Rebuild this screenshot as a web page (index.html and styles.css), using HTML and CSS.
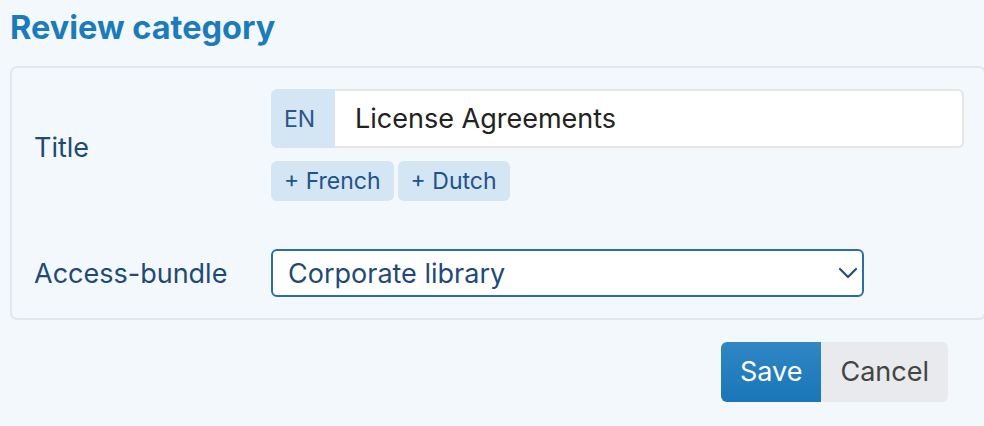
FILE: index.html
```html
<!DOCTYPE html>
<html lang="en">
<head>
    <meta charset="UTF-8">
    <title>Review category</title>
    <meta name="viewport" content="width=device-width, initial-scale=1">
    <link rel="stylesheet" href="styles.css">
</head>
<body>
    <main class="page">
        <h1 class="page-title">Review category</h1>
        <form class="panel">
            <div class="grid">
                <label class="field-label title-label" for="title-en">Title</label>
                <div class="field">
                    <div class="lang-input">
                        <span class="lang-tag">EN</span>
                        <input id="title-en" type="text" value="License Agreements">
                    </div>
                    <div class="lang-add">
                        <button type="button" class="lang-btn">+ French</button>
                        <button type="button" class="lang-btn">+ Dutch</button>
                    </div>
                </div>
                <label class="field-label" for="bundle">Access-bundle</label>
                <div class="select-wrap">
                    <select id="bundle">
                        <option>Corporate library</option>
                    </select>
                    <svg class="chevron" width="20" height="12" viewBox="0 0 20 12">
                        <path d="M2 2 L10 10 L18 2" fill="none" stroke="#2b4d70" stroke-width="2.2" stroke-linecap="round" stroke-linejoin="round"/>
                    </svg>
                </div>
            </div>
        </form>
        <div class="actions">
            <button type="submit" class="btn btn-primary">Save</button>
            <button type="button" class="btn btn-secondary">Cancel</button>
        </div>
    </main>
</body>
</html>
```

FILE: styles.css
```css
* {
    box-sizing: border-box;
}
html, body {
    margin: 0;
    padding: 0;
    background: #f3f8fc;
    overflow: hidden;
}
body, input, select, button {
    font-family: Inter, "Noto Sans", sans-serif;
    font-size: 27px;
}
.page {
    padding: 10px 0 0 10px;
    width: 986px;
}
.page-title {
    margin: 0 0 20px 0;
    font-size: 32.5px;
    font-weight: 700;
    color: #1b7bbb;
    line-height: 36px;
}
.panel {
    border: 2px solid #dfe7ef;
    border-radius: 7px;
    padding: 21px 20px 21px 22px;
}
.grid {
    display: grid;
    grid-template-columns: 237px 1fr;
    row-gap: 48px;
    align-items: center;
}
.field-label {
    color: #1f4a78;
}
.title-label {
    padding-top: 4px;
}
.lang-input {
    display: flex;
    height: 59px;
}
.lang-tag {
    display: flex;
    align-items: center;
    padding: 0 13px;
    width: 64px;
    background: #d4e5f3;
    color: #2a578a;
    font-size: 23px;
    border-radius: 6px 0 0 6px;
}
.lang-input input {
    flex: 1;
    min-width: 0;
    border: 2px solid #e3e7eb;
    border-left: none;
    border-radius: 0 6px 6px 0;
    background: white;
    color: #222;
    padding: 0 20px;
    outline: none;
}
.lang-add {
    display: flex;
    gap: 4px;
    margin-top: 13px;
}
.lang-btn {
    all: unset;
    cursor: pointer;
    background: #d4e5f3;
    color: #21538a;
    font-size: 23px;
    height: 40px;
    line-height: 40px;
    padding: 0 13px;
    border-radius: 6px;
}
.select-wrap {
    position: relative;
    width: 593px;
}
.select-wrap select {
    appearance: none;
    width: 100%;
    height: 48px;
    border: 2px solid #2a6fa3;
    border-radius: 6px;
    background: white;
    color: #1f4a78;
    padding: 0 40px 0 15px;
    outline: none;
}
.chevron {
    position: absolute;
    right: 6px;
    top: 18px;
    pointer-events: none;
}
.actions {
    display: flex;
    justify-content: flex-end;
    padding-right: 38px;
    margin-top: 22px;
}
.btn {
    all: unset;
    cursor: pointer;
    height: 60px;
    line-height: 60px;
    padding: 0 19px;
}
.btn-primary {
    background: linear-gradient(#2f87c3, #1a76b9);
    color: white;
    border-radius: 6px 0 0 6px;
}
.btn-secondary {
    background: #e8eaed;
    color: #444;
    border-radius: 0 6px 6px 0;
}
```
